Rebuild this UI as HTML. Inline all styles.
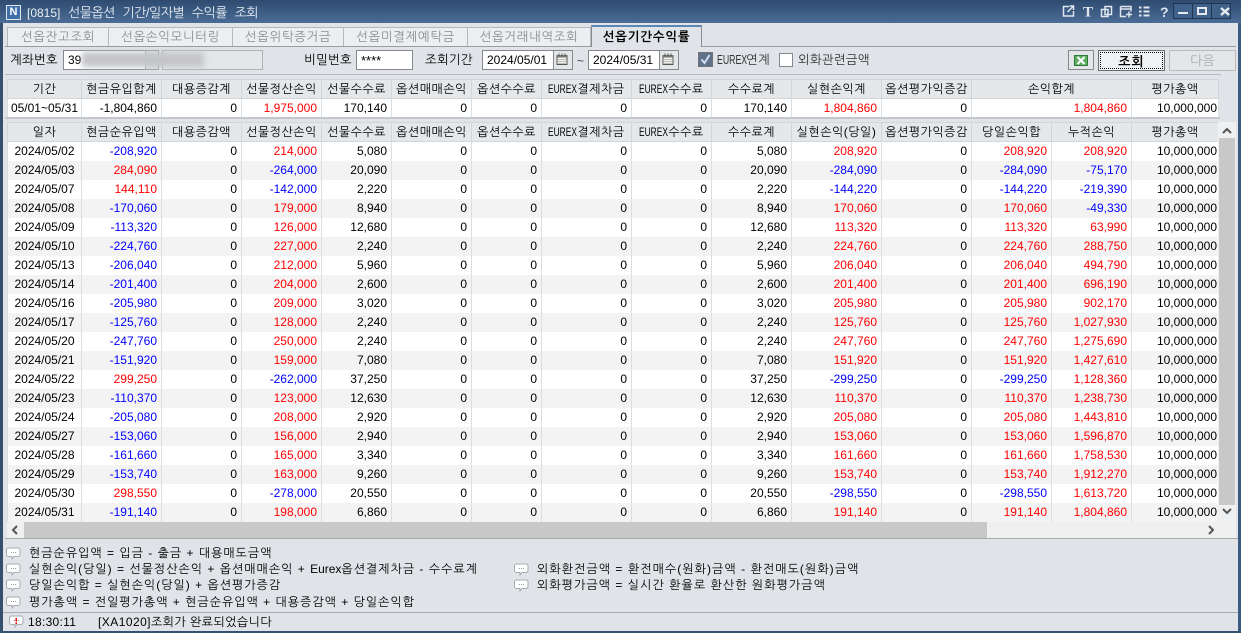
<!DOCTYPE html>
<html lang="ko"><head><meta charset="utf-8"><title>[0815] 선물옵션 기간/일자별 수익률 조회</title>
<style>
*{box-sizing:border-box}
html,body{margin:0;padding:0;width:1241px;height:633px;overflow:hidden;background:#e0e3e8}
body{font-family:"Liberation Sans","NanumGothic","Noto Sans CJK KR",sans-serif;font-size:12px;color:#000;position:relative}
.a{position:absolute;white-space:nowrap}
#title{left:0;top:0;width:1241px;height:23px;background:linear-gradient(180deg,#2f4b70,#4a6c96)}
#fl{left:0;top:23px;width:3px;height:610px;background:#34506f}
#fr{left:1238px;top:23px;width:3px;height:610px;background:#3a5a80}
#fb{left:0;top:631px;width:1241px;height:2px;background:#34506f}
.tab{top:27px;height:19px;background:#eceef1;border:1px solid #b5b8bb;border-bottom:0;border-left:0;color:#8b8d90;text-align:center;line-height:19px;font-size:12.5px;letter-spacing:.6px}
.inp{background:#fff;border:1px solid #85888c;height:20px;line-height:18px;padding-left:4px;font-size:12px}
.cal{width:19px;height:20px;background:#e4e6e8;border:1px solid #85888c;border-left:0}
.lb{font-size:12.5px;line-height:20px;top:50px;letter-spacing:.2px}
table{border-collapse:collapse;table-layout:fixed;position:absolute;left:7px;font-size:12px}
td,th{padding:0 4px 0 0;border:1px solid #dcdfe2;border-top:0;border-bottom:0;text-align:right;overflow:hidden;white-space:nowrap;font-weight:400;height:19px;line-height:18px;letter-spacing:0}
th{background:#e5e8eb;text-align:center;padding:0;font-size:12px;letter-spacing:.5px;border:1px solid #d3d6d9}
td.c{text-align:center;padding:0}
td.l{padding-right:1px}
.r{color:#f00}.b{color:#00f}
tr.e td{background:#f3f3f3}
tr.o td{background:#fff}
.n{font-size:12px;left:29px;line-height:16px;letter-spacing:1px}
.x{display:inline-block;width:29px;transform:scaleX(.7);transform-origin:left center;letter-spacing:0;text-align:left;vertical-align:top}
.x2{letter-spacing:0}
</style></head><body>
<svg width="0" height="0" style="position:absolute"><defs>
<g id="bub"><path d="M2.500 1h9.500a2 2 0 0 1 2 2v4.500a2 2 0 0 1-2 2H8l-2 2.500v-2.500H2.500a2 2 0 0 1-2-2V3a2 2 0 0 1 2-2z" fill="#fff" stroke="#a8abae"/><path d="M5 5.500h1M7 5.500h1M9 5.500h1" stroke="#999"/></g>
<g id="cal"><path d="M3 4.500h10v9H3z" fill="#f2f2ea" stroke="#555"/><path d="M3 4h10v2.500H3z" fill="#777"/><path d="M5 2.500v2.500M8 2.500v2.500M11 2.500v2.500" stroke="#555"/><path d="M4.500 8.500h7M4.500 10.500h7M4.500 12.500h7" stroke="#888" stroke-dasharray="1 1"/></g>
</defs></svg>
<div class="a" id="title"></div>
<div class="a" style="left:6px;top:5px;width:15px;height:15px;background:#3f6fa8;border:1px solid #dfe6ee;color:#fff;font:700 11px/13px 'Liberation Sans',sans-serif;text-align:center">N</div>
<div class="a" style="left:27px;top:2px;line-height:21px;font-size:13px;letter-spacing:-.5px;color:#e9eef4;word-spacing:4.500px"><span style="font-size:12px;letter-spacing:0">[0815]</span> 선물옵션 기간/일자별 수익률 조회</div>
<svg class="a" style="left:1060px;top:2px" width="181" height="21" fill="none" stroke="#dfe6ee" stroke-width="1.500">
<path d="M9 4.500H3.500v9.500h10V9M7.500 10l6-6M9.500 4h4v4"/>
<text x="23" y="14.500" font-family="Liberation Serif" font-size="15" font-weight="700" fill="#dfe6ee" stroke="none">T</text>
<path d="M45 4.500h6.500v8H45zM41.500 7.500h6.500v7h-6.500z"/>
<path d="M60.500 4.500h10.500v5M60.500 4.500v10h5.500M60.500 7h10.500M69 9.500v6M66 12.500h6"/>
<path d="M79 5.500h2.500M79 9.500h2.500M79 13.500h2.500M83.500 5.500h6M83.500 9.500h6M83.500 13.500h6" stroke-width="2"/>
<text x="100" y="15" font-family="Liberation Sans" font-size="14" font-weight="700" fill="#dfe6ee" stroke="none">?</text>
</svg>
<div class="a" style="left:1173px;top:3px;width:58px;height:16px;background:#3f618a;border:1px solid #1f3550"></div>
<div class="a" style="left:1192px;top:3px;width:20px;height:16px;border-left:1px solid #1f3550;border-right:1px solid #1f3550"></div>
<svg class="a" style="left:1173px;top:3px" width="58" height="16" fill="none" stroke="#e4eaf0" stroke-width="2"><path d="M5 10h10"/><path d="M25 5h8v6h-8z"/><path d="M48 5l8 7M56 5l-8 7" stroke-width="2.400"/></svg>
<div class="a" id="fl"></div><div class="a" id="fr"></div><div class="a" id="fb"></div>

<div class="a tab" style="left:7px;width:102px;border-left:1px solid #b5b8bb">선옵잔고조회</div>
<div class="a tab" style="left:109px;width:124px">선옵손익모니터링</div>
<div class="a tab" style="left:233px;width:111px">선옵위탁증거금</div>
<div class="a tab" style="left:344px;width:124px">선옵미결제예탁금</div>
<div class="a tab" style="left:468px;width:123px">선옵거래내역조회</div>
<div class="a" style="left:5px;top:46px;width:1231px;height:1px;background:#9a9da0"></div>
<div class="a tab" style="left:591px;top:25px;width:111px;height:22px;background:#e0e3e8;border:1px solid #8a8d90;border-top:2px solid #5b87b5;border-bottom:0;color:#000;font-weight:700;line-height:20px;letter-spacing:.8px">선옵기간수익률</div>

<div class="a lb" style="left:10px">계좌번호</div>
<div class="a inp" style="left:63px;top:50px;width:83px">39</div>
<div class="a" style="left:145px;top:50px;width:14px;height:20px;background:#dfe2e5;border:1px solid #9a9da0"></div>
<div class="a" style="left:162px;top:50px;width:101px;height:20px;background:#e4e6e9;border:1px solid #b0b3b6"></div>
<div class="a" style="left:82px;top:52px;width:122px;height:15px;background:#c4c5c8;filter:blur(3px)"></div>
<div class="a lb" style="left:304px">비밀번호</div>
<div class="a inp" style="left:356px;top:50px;width:57px;font-size:13px;line-height:20px">****</div>
<div class="a lb" style="left:425px">조회기간</div>
<div class="a inp" style="left:482px;top:50px;width:72px">2024/05/01</div>
<div class="a cal" style="left:554px;top:50px"><svg width="18" height="18"><use href="#cal"/></svg></div>
<div class="a" style="left:577px;top:50px;line-height:22px;color:#444">~</div>
<div class="a inp" style="left:588px;top:50px;width:72px">2024/05/31</div>
<div class="a cal" style="left:660px;top:50px"><svg width="18" height="18"><use href="#cal"/></svg></div>
<svg class="a" style="left:698px;top:52px" width="16" height="16"><rect x=".5" y=".5" width="14" height="14" fill="#5f7288" stroke="#707478"/><path d="M3.500 7.500l3 3.500 5-8" fill="none" stroke="#cfe0f2" stroke-width="2"/></svg>
<div class="a lb" style="left:717px;color:#333"><span class="x">EUREX</span>연계</div>
<div class="a" style="left:779px;top:53px;width:14px;height:14px;background:#fff;border:1px solid #85888c"></div>
<div class="a lb" style="left:798px;color:#333">외화관련금액</div>
<div class="a" style="left:1068px;top:50px;width:26px;height:20px;background:#e4e6e8;border:1px solid #85888c"></div>
<svg class="a" style="left:1073px;top:52px" width="16" height="16"><rect x="1.500" y="3.500" width="13" height="10" fill="#5fae5f" stroke="#2a7a3a"/><path d="M4.500 5l7 7M11.500 5l-7 7" stroke="#fff" stroke-width="2"/></svg>
<div class="a" style="left:1098px;top:50px;width:67px;height:21px;background:#f1f2f3;border:1px solid #6a6d70;text-align:center;font-weight:700;line-height:18px;font-size:13px;letter-spacing:1px"><div style="border:1px dotted #000;margin:1px;height:17px">조회</div></div>
<div class="a" style="left:1169px;top:50px;width:67px;height:21px;background:#e4e6e9;border:1px solid #b8bbbe;text-align:center;color:#aaadb0;line-height:20px;font-size:13px">다음</div>
<div class="a" style="left:5px;top:74px;width:1216px;height:1px;background:#b8bbbe"></div>

<table style="top:79px;width:1211px">
<colgroup><col style="width:74px"><col style="width:80px"><col style="width:80px"><col style="width:80px"><col style="width:70px"><col style="width:80px"><col style="width:70px"><col style="width:90px"><col style="width:80px"><col style="width:80px"><col style="width:90px"><col style="width:90px"><col style="width:160px"><col style="width:87px"></colgroup>
<tr><th>기간</th><th>현금유입합계</th><th>대용증감계</th><th>선물정산손익</th><th>선물수수료</th><th>옵션매매손익</th><th>옵션수수료</th><th><span class="x">EUREX</span>결제차금</th><th><span class="x">EUREX</span>수수료</th><th>수수료계</th><th>실현손익계</th><th>옵션평가익증감</th><th>손익합계</th><th>평가총액</th></tr>
<tr class="o"><td class="c">05/01~05/31</td><td>-1,804,860</td><td>0</td><td class="r">1,975,000</td><td>170,140</td><td>0</td><td>0</td><td>0</td><td>0</td><td>170,140</td><td class="r">1,804,860</td><td>0</td><td class="r">1,804,860</td><td class="l">10,000,000</td></tr>
</table>
<div class="a" style="left:5px;top:117px;width:1215px;height:2px;background:#c4c7ca"></div>

<table style="top:122px;width:1211px">
<colgroup><col style="width:74px"><col style="width:80px"><col style="width:80px"><col style="width:80px"><col style="width:70px"><col style="width:80px"><col style="width:70px"><col style="width:90px"><col style="width:80px"><col style="width:80px"><col style="width:90px"><col style="width:90px"><col style="width:80px"><col style="width:80px"><col style="width:87px"></colgroup>
<tr><th>일자</th><th>현금순유입액</th><th>대용증감액</th><th>선물정산손익</th><th>선물수수료</th><th>옵션매매손익</th><th>옵션수수료</th><th><span class="x">EUREX</span>결제차금</th><th><span class="x">EUREX</span>수수료</th><th>수수료계</th><th>실현손익(당일)</th><th>옵션평가익증감</th><th>당일손익합</th><th>누적손익</th><th>평가총액</th></tr>
<tr class="o"><td class="c">2024/05/02</td><td class="b">-208,920</td><td>0</td><td class="r">214,000</td><td>5,080</td><td>0</td><td>0</td><td>0</td><td>0</td><td>5,080</td><td class="r">208,920</td><td>0</td><td class="r">208,920</td><td class="r">208,920</td><td class="l">10,000,000</td></tr>
<tr class="e"><td class="c">2024/05/03</td><td class="r">284,090</td><td>0</td><td class="b">-264,000</td><td>20,090</td><td>0</td><td>0</td><td>0</td><td>0</td><td>20,090</td><td class="b">-284,090</td><td>0</td><td class="b">-284,090</td><td class="b">-75,170</td><td class="l">10,000,000</td></tr>
<tr class="o"><td class="c">2024/05/07</td><td class="r">144,110</td><td>0</td><td class="b">-142,000</td><td>2,220</td><td>0</td><td>0</td><td>0</td><td>0</td><td>2,220</td><td class="b">-144,220</td><td>0</td><td class="b">-144,220</td><td class="b">-219,390</td><td class="l">10,000,000</td></tr>
<tr class="e"><td class="c">2024/05/08</td><td class="b">-170,060</td><td>0</td><td class="r">179,000</td><td>8,940</td><td>0</td><td>0</td><td>0</td><td>0</td><td>8,940</td><td class="r">170,060</td><td>0</td><td class="r">170,060</td><td class="b">-49,330</td><td class="l">10,000,000</td></tr>
<tr class="o"><td class="c">2024/05/09</td><td class="b">-113,320</td><td>0</td><td class="r">126,000</td><td>12,680</td><td>0</td><td>0</td><td>0</td><td>0</td><td>12,680</td><td class="r">113,320</td><td>0</td><td class="r">113,320</td><td class="r">63,990</td><td class="l">10,000,000</td></tr>
<tr class="e"><td class="c">2024/05/10</td><td class="b">-224,760</td><td>0</td><td class="r">227,000</td><td>2,240</td><td>0</td><td>0</td><td>0</td><td>0</td><td>2,240</td><td class="r">224,760</td><td>0</td><td class="r">224,760</td><td class="r">288,750</td><td class="l">10,000,000</td></tr>
<tr class="o"><td class="c">2024/05/13</td><td class="b">-206,040</td><td>0</td><td class="r">212,000</td><td>5,960</td><td>0</td><td>0</td><td>0</td><td>0</td><td>5,960</td><td class="r">206,040</td><td>0</td><td class="r">206,040</td><td class="r">494,790</td><td class="l">10,000,000</td></tr>
<tr class="e"><td class="c">2024/05/14</td><td class="b">-201,400</td><td>0</td><td class="r">204,000</td><td>2,600</td><td>0</td><td>0</td><td>0</td><td>0</td><td>2,600</td><td class="r">201,400</td><td>0</td><td class="r">201,400</td><td class="r">696,190</td><td class="l">10,000,000</td></tr>
<tr class="o"><td class="c">2024/05/16</td><td class="b">-205,980</td><td>0</td><td class="r">209,000</td><td>3,020</td><td>0</td><td>0</td><td>0</td><td>0</td><td>3,020</td><td class="r">205,980</td><td>0</td><td class="r">205,980</td><td class="r">902,170</td><td class="l">10,000,000</td></tr>
<tr class="e"><td class="c">2024/05/17</td><td class="b">-125,760</td><td>0</td><td class="r">128,000</td><td>2,240</td><td>0</td><td>0</td><td>0</td><td>0</td><td>2,240</td><td class="r">125,760</td><td>0</td><td class="r">125,760</td><td class="r">1,027,930</td><td class="l">10,000,000</td></tr>
<tr class="o"><td class="c">2024/05/20</td><td class="b">-247,760</td><td>0</td><td class="r">250,000</td><td>2,240</td><td>0</td><td>0</td><td>0</td><td>0</td><td>2,240</td><td class="r">247,760</td><td>0</td><td class="r">247,760</td><td class="r">1,275,690</td><td class="l">10,000,000</td></tr>
<tr class="e"><td class="c">2024/05/21</td><td class="b">-151,920</td><td>0</td><td class="r">159,000</td><td>7,080</td><td>0</td><td>0</td><td>0</td><td>0</td><td>7,080</td><td class="r">151,920</td><td>0</td><td class="r">151,920</td><td class="r">1,427,610</td><td class="l">10,000,000</td></tr>
<tr class="o"><td class="c">2024/05/22</td><td class="r">299,250</td><td>0</td><td class="b">-262,000</td><td>37,250</td><td>0</td><td>0</td><td>0</td><td>0</td><td>37,250</td><td class="b">-299,250</td><td>0</td><td class="b">-299,250</td><td class="r">1,128,360</td><td class="l">10,000,000</td></tr>
<tr class="e"><td class="c">2024/05/23</td><td class="b">-110,370</td><td>0</td><td class="r">123,000</td><td>12,630</td><td>0</td><td>0</td><td>0</td><td>0</td><td>12,630</td><td class="r">110,370</td><td>0</td><td class="r">110,370</td><td class="r">1,238,730</td><td class="l">10,000,000</td></tr>
<tr class="o"><td class="c">2024/05/24</td><td class="b">-205,080</td><td>0</td><td class="r">208,000</td><td>2,920</td><td>0</td><td>0</td><td>0</td><td>0</td><td>2,920</td><td class="r">205,080</td><td>0</td><td class="r">205,080</td><td class="r">1,443,810</td><td class="l">10,000,000</td></tr>
<tr class="e"><td class="c">2024/05/27</td><td class="b">-153,060</td><td>0</td><td class="r">156,000</td><td>2,940</td><td>0</td><td>0</td><td>0</td><td>0</td><td>2,940</td><td class="r">153,060</td><td>0</td><td class="r">153,060</td><td class="r">1,596,870</td><td class="l">10,000,000</td></tr>
<tr class="o"><td class="c">2024/05/28</td><td class="b">-161,660</td><td>0</td><td class="r">165,000</td><td>3,340</td><td>0</td><td>0</td><td>0</td><td>0</td><td>3,340</td><td class="r">161,660</td><td>0</td><td class="r">161,660</td><td class="r">1,758,530</td><td class="l">10,000,000</td></tr>
<tr class="e"><td class="c">2024/05/29</td><td class="b">-153,740</td><td>0</td><td class="r">163,000</td><td>9,260</td><td>0</td><td>0</td><td>0</td><td>0</td><td>9,260</td><td class="r">153,740</td><td>0</td><td class="r">153,740</td><td class="r">1,912,270</td><td class="l">10,000,000</td></tr>
<tr class="o"><td class="c">2024/05/30</td><td class="r">298,550</td><td>0</td><td class="b">-278,000</td><td>20,550</td><td>0</td><td>0</td><td>0</td><td>0</td><td>20,550</td><td class="b">-298,550</td><td>0</td><td class="b">-298,550</td><td class="r">1,613,720</td><td class="l">10,000,000</td></tr>
<tr class="e"><td class="c">2024/05/31</td><td class="b">-191,140</td><td>0</td><td class="r">198,000</td><td>6,860</td><td>0</td><td>0</td><td>0</td><td>0</td><td>6,860</td><td class="r">191,140</td><td>0</td><td class="r">191,140</td><td class="r">1,804,860</td><td class="l">10,000,000</td></tr>
</table>

<div class="a" style="left:1218px;top:122px;width:18px;height:400px;background:#eff0f1"></div>
<div class="a" style="left:1219px;top:138px;width:16px;height:367px;background:#c8c8c8"></div>
<svg class="a" style="left:1218px;top:122px" width="18" height="400" fill="none" stroke="#555" stroke-width="2"><path d="M5 11l4-4 4 4"/><path d="M5 387l4 4 4-4"/></svg>
<div class="a" style="left:7px;top:522px;width:1229px;height:16px;background:#f0f0f0"></div>
<div class="a" style="left:24px;top:522px;width:963px;height:16px;background:#c8c8c8"></div>
<svg class="a" style="left:7px;top:522px" width="1229" height="16" fill="none" stroke="#555" stroke-width="2"><path d="M10 4l-4 4 4 4"/><path d="M1202 4l4 4-4 4"/></svg>
<div class="a" style="left:5px;top:538px;width:1233px;height:1px;background:#a8abae"></div>

<svg class="a" style="left:6px;top:547px" width="15" height="14"><use href="#bub"/></svg>
<div class="a n" style="top:545px">현금순유입액 = 입금 - 출금 + 대용매도금액</div>
<svg class="a" style="left:6px;top:563px" width="15" height="14"><use href="#bub"/></svg>
<div class="a n" style="top:561px">실현손익(당일) = 선물정산손익 + 옵션매매손익 + <span class="x2">Eurex</span>옵션결제차금 - 수수료계</div>
<svg class="a" style="left:6px;top:579px" width="15" height="14"><use href="#bub"/></svg>
<div class="a n" style="top:577px">당일손익합 = 실현손익(당일) + 옵션평가증감</div>
<svg class="a" style="left:6px;top:596px" width="15" height="14"><use href="#bub"/></svg>
<div class="a n" style="top:594px">평가총액 = 전일평가총액 + 현금순유입액 + 대용증감액 + 당일손익합</div>
<svg class="a" style="left:514px;top:563px" width="15" height="14"><use href="#bub"/></svg>
<div class="a n" style="left:537px;top:561px;letter-spacing:1.060px">외화환전금액 = 환전매수(원화)금액 - 환전매도(원화)금액</div>
<svg class="a" style="left:514px;top:579px" width="15" height="14"><use href="#bub"/></svg>
<div class="a n" style="left:537px;top:577px;letter-spacing:1.050px">외화평가금액 = 실시간 환율로 환산한 원화평가금액</div>

<div class="a" style="left:3px;top:612px;width:1235px;height:1px;background:#a8abae"></div>
<svg class="a" style="left:9px;top:615px" width="15" height="14"><use href="#bub"/><rect x="6.500" y="3" width="1.500" height="3.500" fill="#e00"/><rect x="6.500" y="7.500" width="1.500" height="1.500" fill="#e00"/></svg>
<div class="a" style="left:28px;top:614px;line-height:16px;letter-spacing:.3px">18:30:11</div>
<div class="a" style="left:98px;top:614px;line-height:16px;letter-spacing:.45px">[XA1020]조회가 완료되었습니다</div>
</body></html>
